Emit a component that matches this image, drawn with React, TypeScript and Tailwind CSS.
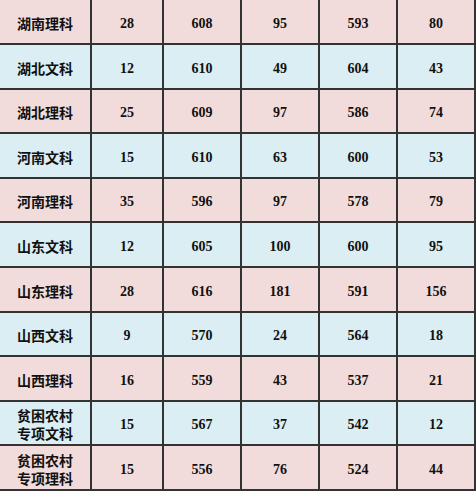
import React from "react";

type Row = { name: string[]; v: string[]; h: string };

const rows: Row[] = [
  { name: ["湖南理科"], v: ["28", "608", "95", "593", "80"], h: "h-[43px]" },
  { name: ["湖北文科"], v: ["12", "610", "49", "604", "43"], h: "h-[43px]" },
  { name: ["湖北理科"], v: ["25", "609", "97", "586", "74"], h: "h-[42px]" },
  { name: ["河南文科"], v: ["15", "610", "63", "600", "53"], h: "h-[43px]" },
  { name: ["河南理科"], v: ["35", "596", "97", "578", "79"], h: "h-[42px]" },
  { name: ["山东文科"], v: ["12", "605", "100", "600", "95"], h: "h-[43px]" },
  { name: ["山东理科"], v: ["28", "616", "181", "591", "156"], h: "h-[43px]" },
  { name: ["山西文科"], v: ["9", "570", "24", "564", "18"], h: "h-[42px]" },
  { name: ["山西理科"], v: ["16", "559", "43", "537", "21"], h: "h-[43px]" },
  { name: ["贫困农村", "专项文科"], v: ["15", "567", "37", "542", "12"], h: "h-[42px]" },
  { name: ["贫困农村", "专项理科"], v: ["15", "556", "76", "524", "44"], h: "h-[43px]" },
];

export default function App() {
  return (
    <div className="w-[476px] h-[491px] bg-white overflow-hidden flex flex-col">
      {rows.map((r, i) => {
        const bg = i % 2 === 0 ? "bg-[#f2dcdb]" : "bg-[#daeef3]";
        return (
          <div
            key={i}
            className="grid grid-cols-[90px_70px_76px_76px_76px_76px] gap-x-[2px] pr-[2px] pb-[2px] bg-[#333333]"
          >
            <div
              className={`${bg} ${r.h} flex items-center justify-center pt-[2px] text-[14px] leading-[18px] font-bold text-[#111] text-center [font-family:'Noto_Sans_CJK_SC',sans-serif]`}
            >
              <div>
                {r.name.length === 1 ? (
                  r.name[0]
                ) : (
                  <>
                    {r.name[0]}
                    <br />
                    {r.name[1]}
                  </>
                )}
              </div>
            </div>
            {r.v.map((x, j) => (
              <div
                key={j}
                className={`${bg} ${r.h} flex items-center justify-center pt-[3px] text-[14px] font-bold text-[#111] [font-family:'Liberation_Serif',serif]`}
              >
                {x}
              </div>
            ))}
          </div>
        );
      })}
    </div>
  );
}
